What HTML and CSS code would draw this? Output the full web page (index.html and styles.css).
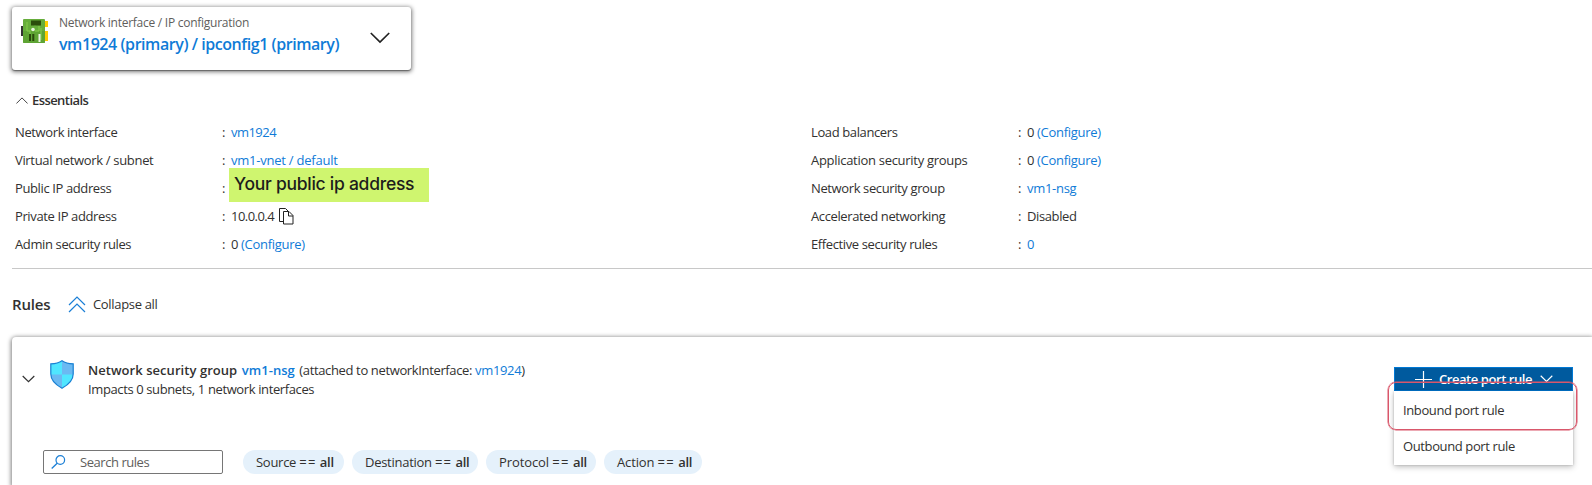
FILE: index.html
```html
<!DOCTYPE html>
<html lang="en">
<head>
<meta charset="utf-8">
<title>Networking</title>
<link rel="stylesheet" href="styles.css">
</head>
<body>
<section class="nic-card">
  <svg class="nic-icon" width="28" height="26" viewBox="0 0 28 26">
    <rect x="0" y="7" width="4" height="10" fill="#333"/>
    <rect x="23" y="2" width="4" height="6" fill="#fc0"/>
    <rect x="23" y="12" width="4" height="10" fill="#fc0"/>
    <rect x="2" y="0" width="22" height="24" rx="1" fill="#66ad3b"/>
    <path d="M2 12h22v11a1 1 0 0 1-1 1H3a1 1 0 0 1-1-1z" fill="#5ea434"/>
    <path d="M6 3v9h3v4M18 7v5h-4M14 3v4M20 9v12" fill="none" stroke="#86cf4c"/>
    <rect x="10" y="1.500" width="10" height="5" fill="#2b4d0c"/>
    <circle cx="12" cy="10.500" r="1.800" fill="#e8f5dc"/>
    <path d="M9 15v7M12.300 15v7" stroke="#294a0b" stroke-width="2"/>
    <path d="M18.500 15v8" stroke="#eef6e8" stroke-width="2"/>
  </svg>
  <div class="nic-text">
    <div class="nic-label">Network interface / IP configuration</div>
    <div class="nic-value">vm1924 (primary) / ipconfig1 (primary)</div>
  </div>
  <svg class="nic-chevron" width="20" height="12" viewBox="0 0 20 12"><path d="M.8 1 10 10 19.200 1" fill="none" stroke="#222" stroke-width="1.700"/></svg>
</section>

<div class="essentials-head">
  <svg width="12" height="7" viewBox="0 0 12 7"><path d="M.4 6.500 6 .9l5.600 5.600" fill="none" stroke="#444"/></svg>
  <span class="essentials-title">Essentials</span>
</div>

<div class="essentials">
  <dl class="props">
    <dt>Network interface</dt><dd><a class="tight">vm1924</a></dd>
    <dt class="virtual">Virtual network / subnet</dt><dd><a class="vnet">vm1-vnet / default</a></dd>
    <dt>Public IP address</dt><dd><span class="note">Your public ip address</span></dd>
    <dt>Private IP address</dt><dd><span class="tight">10.0.0.4</span>
      <svg class="copy" width="15" height="17" viewBox="0 0 15 17"><path d="M4.500 13.500h-4V.5h6l2.500 2.500M4.500 3.500h5.500l4 4v8.500h-9.500zM9.500 3.500v4.500h4.500" fill="none" stroke="#222"/></svg></dd>
    <dt>Admin security rules</dt><dd>0 <a class="loose">(Configure)</a></dd>
  </dl>
  <dl class="props">
    <dt>Load balancers</dt><dd>0 <a class="loose">(Configure)</a></dd>
    <dt class="loose">Application security groups</dt><dd>0 <a class="loose">(Configure)</a></dd>
    <dt>Network security group</dt><dd><a class="loose">vm1-nsg</a></dd>
    <dt>Accelerated networking</dt><dd>Disabled</dd>
    <dt>Effective security rules</dt><dd><a>0</a></dd>
  </dl>
</div>

<div class="rules-head">
  <h2>Rules</h2>
  <svg width="18" height="17" viewBox="0 0 18 17"><path d="M1 9 9 1l8 8M1 16l8-8 8 8" fill="none" stroke="#1b7fd6" stroke-width="1.200"/></svg>
  <span>Collapse all</span>
</div>

<section class="nsg">
  <div class="nsg-head">
    <svg class="nsg-chevron" width="13" height="8" viewBox="0 0 13 8"><path d="M.7 1l5.800 5.700L12.300 1" fill="none" stroke="#333" stroke-width="1.200"/></svg>
    <svg class="shield" width="24" height="29" viewBox="0 0 24 29">
      <defs><clipPath id="s"><path d="M12 .8C9 3 5 3.800.8 3.800V14c0 7 6.200 11.500 11.200 14.200C17 25.500 23.200 21 23.200 14V3.800C19 3.800 15 3 12 .8z"/></clipPath></defs>
      <g clip-path="url(#s)"><path fill="#50e6ff" d="M0 0h24v29H0z"/><path fill="#6bb9f2" d="M12 0h12v14.500H12zM0 14.500h12V29H0z"/></g>
      <path d="M12 .8C9 3 5 3.800.8 3.800V14c0 7 6.200 11.500 11.200 14.200C17 25.500 23.200 21 23.200 14V3.800C19 3.800 15 3 12 .8z" fill="none" stroke="#1b80d3" stroke-width="1.200"/>
    </svg>
    <div class="nsg-text">
      <div class="nsg-title"><b>Network security group</b><b><a>vm1-nsg</a></b><span>(attached to networkInterface: <a>vm1924</a>)</span></div>
      <div>Impacts 0 subnets, 1 network interfaces</div>
    </div>
    <div class="create">
      <div class="create-button">
        <svg width="17" height="17" viewBox="0 0 17 17"><path d="M8.500 0v17M0 8.500h17" stroke="#fff" stroke-width="1.200"/></svg>
        <span>Create port rule</span>
        <svg width="13" height="8" viewBox="0 0 13 8"><path d="M.7.8l5.800 5.700L12.300.8" fill="none" stroke="#fff" stroke-width="1.200"/></svg>
      </div>
      <div class="menu">
        <div class="menu-item">Inbound port rule</div>
        <div class="menu-item">Outbound port rule</div>
      </div>
      <div class="highlight"></div>
    </div>
  </div>
  <div class="filters">
    <div class="search">
      <svg width="15" height="14" viewBox="0 0 15 14"><circle cx="9.300" cy="5" r="4.300" fill="none" stroke="#1b7fd6" stroke-width="1.200"/><path d="M6.200 8.200.7 13.500" stroke="#1b7fd6" stroke-width="1.300"/></svg>
      <span>Search rules</span>
    </div>
    <div class="pill source">Source <i>==</i> <b>all</b></div>
    <div class="pill destination">Destination <i>==</i> <b>all</b></div>
    <div class="pill protocol">Protocol <i>==</i> <b>all</b></div>
    <div class="pill action">Action <i>==</i> <b>all</b></div>
  </div>
</section>
</body>
</html>
```
FILE: styles.css
```css
* { box-sizing: border-box; }
html, body { height: 100%; overflow: hidden; }
body {
  display: flex;
  flex-direction: column;
  margin: 0;
  padding: 7px 0 0 12px;
  background: #fff;
  color: #323130;
  font: 13px/18px "Open Sans", "Noto Sans", sans-serif;
  letter-spacing: -0.38px;
}
a { color: #0f7bd7; }
b, h2 { font-weight: 600; }
svg { display: block; flex: none; }
.tight { letter-spacing: -0.54px; }
.loose { letter-spacing: -0.29px; }
.virtual { letter-spacing: -0.33px; }
.vnet { letter-spacing: -0.23px; }

.nic-card {
  display: flex;
  width: 399px;
  height: 63px;
  padding-left: 9px;
  border-radius: 3px;
  background: #fff;
  box-shadow: 0 1px 4px 1px rgba(0, 0, 0, .5), 0 1px 1px rgba(0, 0, 0, .35);
}
.nic-icon { margin-top: 12px; }
.nic-text { width: 321px; padding: 6px 0 0 10px; white-space: nowrap; }
.nic-label { font-size: 12px; line-height: 20px; letter-spacing: -0.26px; color: #605e5c; }
.nic-value { font-size: 16px; line-height: 23px; font-weight: 600; letter-spacing: -0.44px; color: #0f7bd7; }
.nic-chevron { margin-top: 25px; }

.essentials-head { display: flex; align-items: center; gap: 4px; height: 18px; margin: 21px 0 0 4px; }
.essentials-title { font-weight: 600; letter-spacing: -0.57px; }

.essentials {
  display: grid;
  grid-template-columns: 796px 1fr;
  height: 160px;
  padding: 9px 0 0 3px;
  border-bottom: 1px solid #c8c8c8;
}
.props {
  display: grid;
  grid-template-columns: 207px 1fr;
  grid-auto-rows: 28px;
  align-items: center;
  align-content: start;
  margin: 0;
}
.props dd { display: flex; align-items: center; gap: 3px; margin: 0; white-space: nowrap; }
.props dd::before { content: ":"; width: 6px; }
.note {
  width: 200px;
  height: 34px;
  margin: -7px 0 0 -2px;
  padding-left: 5px;
  background: #cff56f;
  color: #1c1c1c;
  font: 500 17.5px/32px Inter, sans-serif;
  letter-spacing: -0.26px;
}
.copy { margin-left: 2px; }

.rules-head { display: flex; align-items: center; height: 20px; margin-top: 25px; }
.rules-head h2 { width: 56px; margin: 0; font-size: 15px; letter-spacing: -0.15px; }
.rules-head span { margin-left: 7px; letter-spacing: -0.33px; }

.nsg {
  flex: 1;
  min-height: 0;
  margin-top: 23px;
  border-radius: 4px 0 0;
  background: #fff;
  box-shadow: 0 1px 4px 1px rgba(0, 0, 0, .5);
}
.nsg-head { display: flex; height: 113px; padding: 23px 0 0 10px; }
.nsg-chevron { margin-top: 15px; }
.shield { margin: 0 0 0 15px; }
.nsg-text { width: 1306px; margin: 1px 0 0 14px; line-height: 19px; }
.nsg-title { display: flex; gap: 4.500px; }
.nsg-title b { letter-spacing: 0.05px; }
.nsg-title span { letter-spacing: -0.36px; }
.create { position: relative; width: 179px; height: 98px; margin-top: 7px; }
.create-button {
  display: flex;
  align-items: center;
  height: 24px;
  padding-left: 20px;
  border: 1px solid #0078d4;
  background: #005a9e;
  color: #fff;
  font-weight: 600;
  letter-spacing: -0.44px;
}
.create-button span { width: 101px; margin-left: 7px; }
.menu { height: 74px; padding: 1px 0; background: #fff; box-shadow: 0 2px 6px rgba(0, 0, 0, .25), 0 0 2px rgba(0, 0, 0, .2); }
.menu-item { height: 36px; padding-left: 9px; line-height: 37px; }
.highlight {
  position: absolute;
  left: -6px;
  top: 15px;
  width: 189px;
  height: 48px;
  border: 1px solid #d9576b;
  border-radius: 8px;
  box-shadow: 0 0 0 .5px #d9576b;
}

.filters { display: flex; padding-left: 31px; }
.search { display: flex; align-items: center; width: 180px; height: 24px; margin-right: 20px; padding-left: 7px; border: 1px solid #767676; border-radius: 2px; color: #605e5c; letter-spacing: -0.45px; }
.search span { margin-left: 14px; }
.pill { height: 24px; margin-right: 8px; padding-left: 13px; border-radius: 12px; background: #e5f1fb; line-height: 24px; letter-spacing: -0.27px; white-space: pre; }
.pill i { font-style: normal; letter-spacing: 1.300px; }
.pill b { letter-spacing: -0.3px; }
.source { width: 101px; }
.destination { width: 126px; }
.protocol { width: 110px; letter-spacing: -0.1px; }
.action { width: 98px; letter-spacing: -0.15px; }
```
